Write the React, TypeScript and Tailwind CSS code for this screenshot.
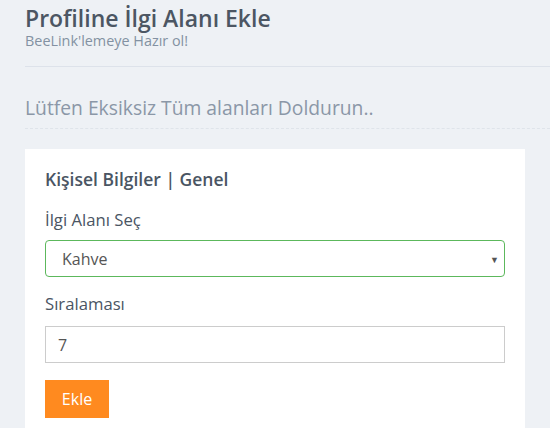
import { useState } from "react";

export default function App() {
  const [ilgi, setIlgi] = useState("Kahve");
  const [sira, setSira] = useState("7");

  return (
    <main
      className="min-h-screen h-[428px] overflow-hidden bg-[#eef1f5] pl-[25px]"
      style={{ fontFamily: '"Open Sans", sans-serif' }}
    >
      {/* Page header */}
      <header className="border-b border-[#dde2ea] pt-[4px] pb-[17px]">
        <h1 className="text-[23px] leading-[28px] font-semibold text-[#4c5663]">
          Profiline İlgi Alanı Ekle
        </h1>
        <p className="mt-[1px] text-[14.4px] leading-[16px] text-[#8391a2]">
          BeeLink'lemeye Hazır ol!
        </p>
      </header>

      <div className="mt-[28px] border-b border-dashed border-[#dfe4ea] pb-[7px]">
        <h2 className="text-[19.3px] leading-[26px] text-[#8b97a7]">
          Lütfen Eksiksiz Tüm alanları Doldurun..
        </h2>
      </div>

      {/* Card */}
      <section className="mt-[20px] w-[500px] bg-white px-5 pt-[18px] pb-6">
        <h3 className="text-[17.5px] leading-[24px] font-semibold text-[#4a5563]">
          Kişisel Bilgiler | Genel
        </h3>

        <label className="mt-[18px] block text-[16.7px] leading-[22px] text-[#4a5563]">
          İlgi Alanı Seç
        </label>
        <div className="relative mt-[9px]">
          <select
            value={ilgi}
            onChange={(e) => setIlgi(e.target.value)}
            className="h-[37px] w-full appearance-none rounded-[4px] border border-[#5cb85c] bg-white pl-4 text-[16px] text-[#555] outline-none"
          >
            <option>Kahve</option>
            <option>Müzik</option>
            <option>Spor</option>
          </select>
          <span className="pointer-events-none absolute right-[6px] top-[13px] text-[9px] text-[#555]">
            ▼
          </span>
        </div>

        <label className="mt-[16px] block text-[16.7px] leading-[22px] text-[#4a5563]">
          Sıralaması
        </label>
        <input
          value={sira}
          onChange={(e) => setSira(e.target.value)}
          className="mt-[11px] block h-[37px] w-full border border-[#ccc] px-3 text-[16px] text-[#555] outline-none"
        />

        <button className="mt-[17px] h-[38px] w-[64px] bg-[#ff8a1f] text-[16px] text-white">
          Ekle
        </button>
      </section>
    </main>
  );
}
